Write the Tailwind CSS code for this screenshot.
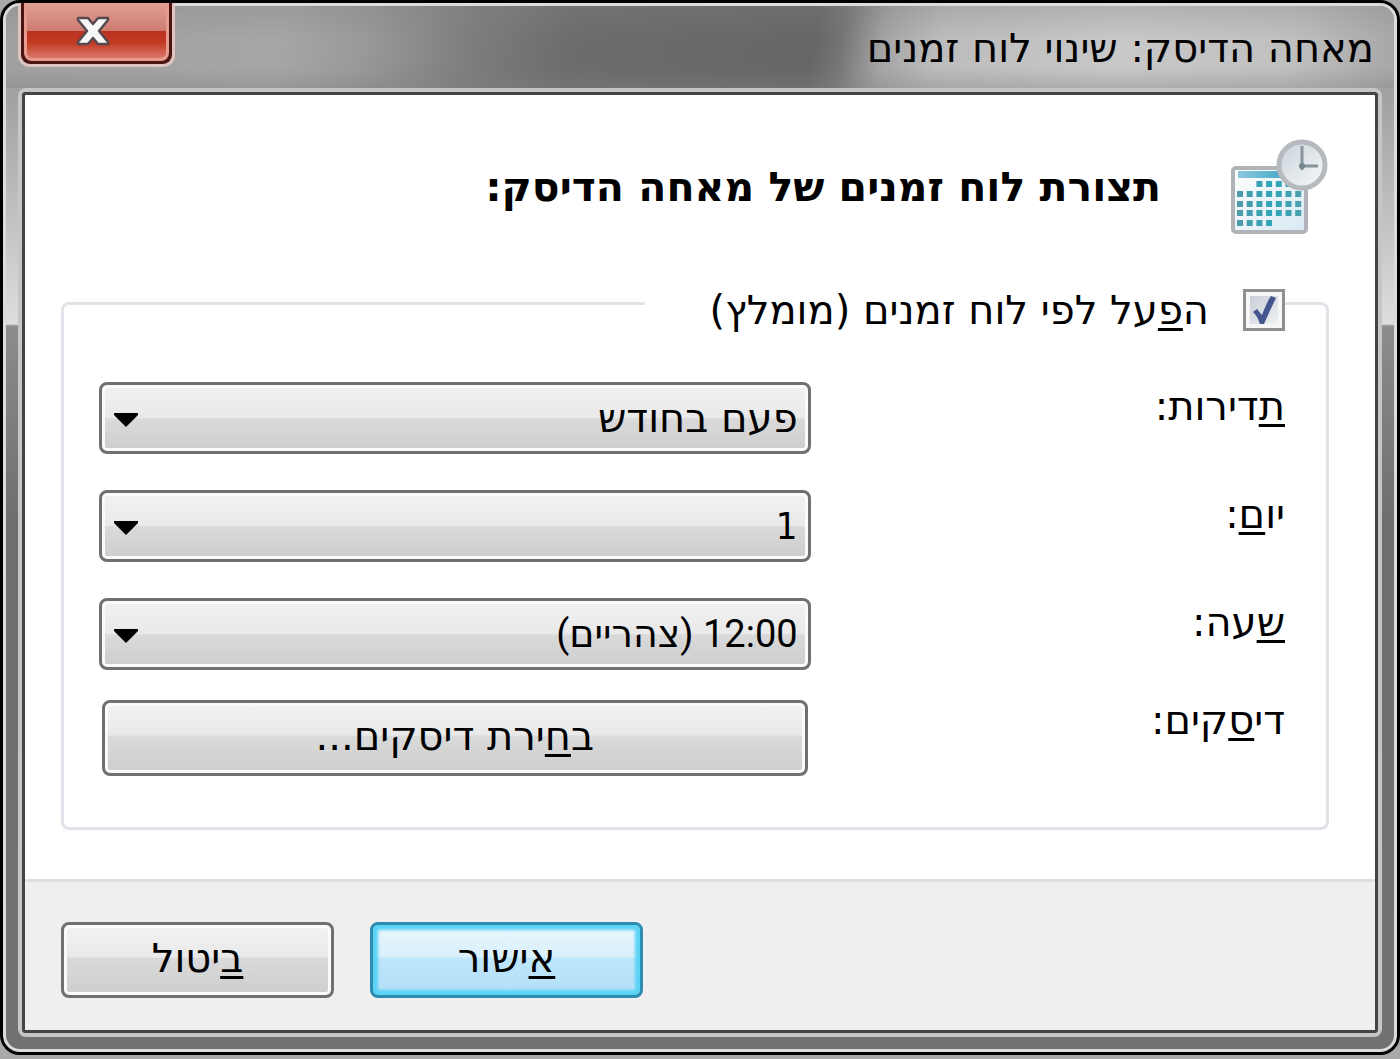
<!DOCTYPE html>
<html lang="he" dir="rtl">
  <head>
    <meta charset="UTF-8" />
    <meta name="viewport" content="width=device-width, initial-scale=1.0" />
    <title>מאחה הדיסק: שינוי לוח זמנים</title>
    <script src="https://cdn.jsdelivr.net/npm/@tailwindcss/browser@4"></script>
  </head>
  <body
    class="flex min-h-screen flex-col bg-[#a9aaa7] pb-1 font-['DejaVu_Sans',sans-serif] text-[40px] leading-[48px] text-black"
  >
    <!-- Window frame -->
    <main
      class="flex flex-1 flex-col rounded-[20px] border-[3px] border-black bg-black"
    >
      <div
        class="flex flex-1 flex-col rounded-[17px] border-[3px] border-[#dcdcdc] bg-[linear-gradient(to_bottom,#a2a2a2_0,#a2a2a2_90px,#dedede_318px,#8c8c8c_320px,#6e6e6e_520px,#727272_100%)] px-3 pb-3"
      >
        <!-- Title bar -->
        <header
          class="-mx-3 flex h-[82px] items-start justify-between rounded-t-[14px] bg-[linear-gradient(to_bottom,#8080804d_0,transparent_40%,transparent_75%,#80808059_100%),linear-gradient(100deg,#a0a0a0_0,#a6a6a6_20%,#999999_26%,#7c7c7c_34%,#6c6c6c_41%,#666666_58%,#747474_60%,#a4a4a4_63%,#bcbcbc_67%,#c8c8c8_80%,#c0c0c0_92%,#a6a6a6_100%)] px-3"
        >
          <h1 class="ps-2 pt-[18px]">מאחה הדיסק: שינוי לוח זמנים</h1>
          <button
            type="button"
            aria-label="סגור"
            class="-mt-[3px] h-16 w-[157px] rounded-b-xl border-3 border-t-0 border-[#dfc4bf] bg-[#4a1512] px-[3px] pb-[3px]"
          >
            <span
              class="flex h-full items-center justify-center rounded-b-lg border-3 border-t-0 border-[#e79a8e] bg-[linear-gradient(to_bottom,#e2a096_0,#cf7c70_50%,#b93220_51%,#c33a22_72%,#d9786a_100%)] ps-2"
            >
              <svg viewBox="0 0 34 32" class="h-8 w-[34px]" aria-hidden="true">
                <path
                  d="M2 3h10l5 6 5-6h10v2l-9 11 9 11v2H22l-5-6-5 6H2v-2l9-11L2 5z"
                  fill="#f7f7f7"
                  stroke="#564a50"
                  stroke-width="2.500"
                  stroke-linejoin="round"
                />
              </svg>
            </span>
          </button>
        </header>

        <!-- Client area -->
        <div
          class="flex flex-1 flex-col rounded-lg border-4 border-[#c6c6c6] bg-[#444]"
        >
          <form
            class="flex flex-1 flex-col rounded border-[3px] border-[#444] bg-white"
          >
            <div class="flex-1 ps-[46px] pe-9 pt-[43px] pb-12">
              <div class="flex items-center">
                <svg
                  viewBox="0 0 98 98"
                  class="size-[98px] shrink-0"
                  aria-hidden="true"
                >
                  <defs>
                    <linearGradient id="page" x1="0" y1="0" x2="1" y2="1">
                      <stop offset="0" stop-color="#ffffff" />
                      <stop offset="1" stop-color="#d8e8f2" />
                    </linearGradient>
                    <linearGradient id="bar" x1="0" y1="0" x2="1" y2="0">
                      <stop offset="0" stop-color="#8cc8de" />
                      <stop offset="1" stop-color="#2f9fbe" />
                    </linearGradient>
                    <linearGradient id="dots" gradientUnits="userSpaceOnUse" x1="8" y1="0" x2="74" y2="0">
                      <stop offset="0" stop-color="#4d9aa8" />
                      <stop offset="0.5" stop-color="#2fa6ba" />
                      <stop offset="1" stop-color="#4fa0ae" />
                    </linearGradient>
                    <linearGradient id="face" x1="0" y1="0" x2="1" y2="1">
                      <stop offset="0" stop-color="#c8d2d8" />
                      <stop offset="0.5" stop-color="#e0e6ea" />
                      <stop offset="1" stop-color="#f9fafb" />
                    </linearGradient>
                  </defs>
                  <rect x="2" y="30" width="73" height="64" rx="3" fill="url(#page)" stroke="#b0b3b8" stroke-width="4" />
                  <rect x="7" y="33" width="63" height="7" fill="url(#bar)" />
                  <g fill="none" stroke="url(#dots)" stroke-width="6" stroke-dasharray="6 3.7">
                    <path d="M25.400 46.010L70 46" />
                    <path d="M6 56.010L72 56" />
                    <path d="M6 66.010L72 66" />
                    <path d="M6 75.010L72 75" />
                    <path d="M6 85.010L41 85" />
                  </g>
                  <circle cx="71" cy="27" r="23" fill="url(#face)" stroke="#b6babe" stroke-width="5" />
                  <path d="M71 8v24M69 28h18" stroke="#87949b" stroke-width="3" fill="none" />
                  <circle cx="71" cy="28" r="3" fill="#76868e" />
                </svg>
                <h2 class="ps-[70px] text-[41px] font-bold">תצורת לוח זמנים של מאחה הדיסק:</h2>
              </div>

              <fieldset
                class="mt-[39px] rounded-lg border-[3px] border-[#e0e3e8] ps-[41px] pe-[35px] pb-[51px]"
              >
                <legend class="w-[54%] pt-[14px]">
                  <label class="flex h-[42px] items-center gap-[34px]">
                    <span class="relative flex size-[42px] shrink-0">
                      <input
                        type="checkbox"
                        checked
                        class="size-full appearance-none border-3 border-[#8e8f8f] bg-[linear-gradient(135deg,#c4c9d2,#f4f6f9)] shadow-[inset_0_0_0_4px_#f6f6f6]"
                      />
                      <svg
                        viewBox="0 0 42 42"
                        class="pointer-events-none absolute inset-0"
                        aria-hidden="true"
                      >
                        <path
                          d="M10 23l4-3 5 6C22 18 25 11 28 7l5 2C29 17 25 26 21 35h-4C15 29 13 26 10 23z"
                          fill="#45568f"
                        />
                      </svg>
                    </span>
                    <span
                      >ה<u class="decoration-3 underline-offset-4">פ</u>על לפי
                      לוח זמנים (מומלץ)</span
                    >
                  </label>
                </legend>

                <div class="mt-[51px] mb-9 grid grid-cols-[2fr_3fr] items-start">
                  <label for="frequency"
                    ><u class="decoration-3 underline-offset-4">ת</u>דירות:</label
                  >
                  <div class="relative">
                    <select
                      id="frequency"
                      class="block h-[72px] w-full appearance-none rounded-lg border-3 border-[#707070] bg-[linear-gradient(to_bottom,#f2f2f2,#e9e9e9_50%,#dadada_51%,#cdcdcd)] ps-[10px] shadow-[inset_0_0_0_3px_#fafafa]"
                    >
                      <option>פעם בחודש</option>
                    </select>
                    <svg viewBox="0 0 24 14" class="pointer-events-none absolute top-[31px] left-[15px] h-[14px] w-6" aria-hidden="true">
                      <path d="M0 0h24v2L12 14 0 2z" />
                    </svg>
                  </div>
                </div>

                <div class="mb-9 grid grid-cols-[2fr_3fr] items-start">
                  <label for="day"
                    >יו<u class="decoration-3 underline-offset-4">ם</u>:</label
                  >
                  <div class="relative">
                    <select
                      id="day"
                      class="block h-[72px] w-full appearance-none rounded-lg border-3 border-[#707070] bg-[linear-gradient(to_bottom,#f2f2f2,#e9e9e9_50%,#dadada_51%,#cdcdcd)] ps-[10px] font-['DejaVu_Sans_Condensed','DejaVu_Sans',sans-serif] text-[38px] shadow-[inset_0_0_0_3px_#fafafa]"
                    >
                      <option>1</option>
                    </select>
                    <svg viewBox="0 0 24 14" class="pointer-events-none absolute top-[31px] left-[15px] h-[14px] w-6" aria-hidden="true">
                      <path d="M0 0h24v2L12 14 0 2z" />
                    </svg>
                  </div>
                </div>

                <div class="mb-[26px] grid grid-cols-[2fr_3fr] items-start">
                  <label for="hour"
                    ><u class="decoration-3 underline-offset-4">ש</u>עה:</label
                  >
                  <div class="relative">
                    <select
                      id="hour"
                      class="block h-[72px] w-full appearance-none rounded-lg border-3 border-[#707070] bg-[linear-gradient(to_bottom,#f2f2f2,#e9e9e9_50%,#dadada_51%,#cdcdcd)] ps-[10px] font-['Roboto','DejaVu_Sans',sans-serif] text-[38px] shadow-[inset_0_0_0_3px_#fafafa]"
                    >
                      <option>12:00 (צהריים)</option>
                    </select>
                    <svg viewBox="0 0 24 14" class="pointer-events-none absolute top-[31px] left-[15px] h-[14px] w-6" aria-hidden="true">
                      <path d="M0 0h24v2L12 14 0 2z" />
                    </svg>
                  </div>
                </div>

                <div class="grid grid-cols-[2fr_3fr] items-start">
                  <label for="disks"
                    >די<u class="decoration-3 underline-offset-4">ס</u>קים:</label
                  >
                  <div class="px-[3px] pt-1">
                    <button
                      id="disks"
                      type="button"
                      class="h-[76px] w-full rounded-lg border-3 border-[#707070] bg-[linear-gradient(to_bottom,#f2f2f2,#e9e9e9_46%,#dadada_47%,#cdcdcd)] pb-1 shadow-[inset_0_0_0_3px_#fafafa]"
                    >
                      ב<u class="decoration-3 underline-offset-4">ח</u>ירת
                      דיסקים...
                    </button>
                  </div>
                </div>
              </fieldset>
            </div>

            <!-- Buttons -->
            <footer
              class="flex justify-end gap-9 border-t-3 border-[#dfdfdf] bg-[#efefef] pe-9 pt-10 pb-8"
            >
              <button
                type="submit"
                class="h-[76px] w-[273px] rounded-lg border-3 border-[#2c8db0] bg-[linear-gradient(to_bottom,#e8f6fd,#d9f0fc_46%,#bee6fd_47%,#b4dff7)] pb-1 shadow-[inset_0_0_3px_5px_#5cd3f5]"
              >
                <u class="decoration-3 underline-offset-4">א</u>ישור
              </button>
              <button
                type="button"
                class="h-[76px] w-[273px] rounded-lg border-3 border-[#707070] bg-[linear-gradient(to_bottom,#f2f2f2,#e9e9e9_46%,#dadada_47%,#cdcdcd)] pb-1 shadow-[inset_0_0_0_3px_#fafafa]"
              >
                <u class="decoration-3 underline-offset-4">ב</u>יטול
              </button>
            </footer>
          </form>
        </div>
      </div>
    </main>
  </body>
</html>
